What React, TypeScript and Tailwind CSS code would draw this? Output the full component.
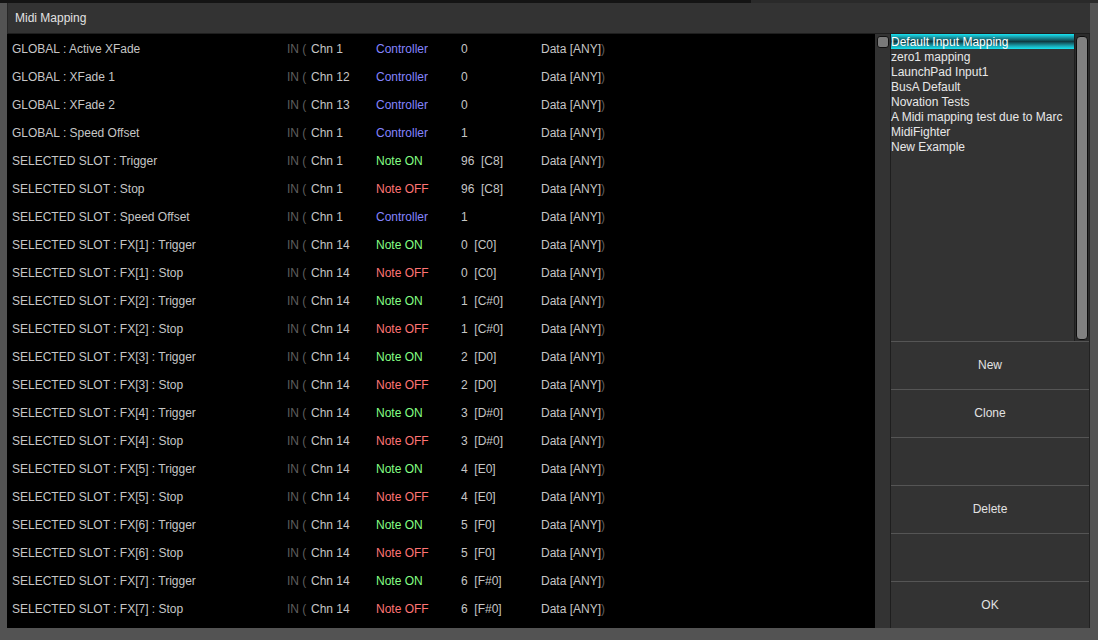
type Row = {
  name: string;
  chn: string;
  type: 'ctrl' | 'on' | 'off';
  num: string;
};

const rows: Row[] = [
  { name: 'GLOBAL : Active XFade', chn: 'Chn 1', type: 'ctrl', num: '0' },
  { name: 'GLOBAL : XFade 1', chn: 'Chn 12', type: 'ctrl', num: '0' },
  { name: 'GLOBAL : XFade 2', chn: 'Chn 13', type: 'ctrl', num: '0' },
  { name: 'GLOBAL : Speed Offset', chn: 'Chn 1', type: 'ctrl', num: '1' },
  { name: 'SELECTED SLOT : Trigger', chn: 'Chn 1', type: 'on', num: '96  [C8]' },
  { name: 'SELECTED SLOT : Stop', chn: 'Chn 1', type: 'off', num: '96  [C8]' },
  { name: 'SELECTED SLOT : Speed Offset', chn: 'Chn 1', type: 'ctrl', num: '1' },
  { name: 'SELECTED SLOT : FX[1] : Trigger', chn: 'Chn 14', type: 'on', num: '0  [C0]' },
  { name: 'SELECTED SLOT : FX[1] : Stop', chn: 'Chn 14', type: 'off', num: '0  [C0]' },
  { name: 'SELECTED SLOT : FX[2] : Trigger', chn: 'Chn 14', type: 'on', num: '1  [C#0]' },
  { name: 'SELECTED SLOT : FX[2] : Stop', chn: 'Chn 14', type: 'off', num: '1  [C#0]' },
  { name: 'SELECTED SLOT : FX[3] : Trigger', chn: 'Chn 14', type: 'on', num: '2  [D0]' },
  { name: 'SELECTED SLOT : FX[3] : Stop', chn: 'Chn 14', type: 'off', num: '2  [D0]' },
  { name: 'SELECTED SLOT : FX[4] : Trigger', chn: 'Chn 14', type: 'on', num: '3  [D#0]' },
  { name: 'SELECTED SLOT : FX[4] : Stop', chn: 'Chn 14', type: 'off', num: '3  [D#0]' },
  { name: 'SELECTED SLOT : FX[5] : Trigger', chn: 'Chn 14', type: 'on', num: '4  [E0]' },
  { name: 'SELECTED SLOT : FX[5] : Stop', chn: 'Chn 14', type: 'off', num: '4  [E0]' },
  { name: 'SELECTED SLOT : FX[6] : Trigger', chn: 'Chn 14', type: 'on', num: '5  [F0]' },
  { name: 'SELECTED SLOT : FX[6] : Stop', chn: 'Chn 14', type: 'off', num: '5  [F0]' },
  { name: 'SELECTED SLOT : FX[7] : Trigger', chn: 'Chn 14', type: 'on', num: '6  [F#0]' },
  { name: 'SELECTED SLOT : FX[7] : Stop', chn: 'Chn 14', type: 'off', num: '6  [F#0]' },
];

const mappings = [
  'Default Input Mapping',
  'zero1 mapping',
  'LaunchPad Input1',
  'BusA Default',
  'Novation Tests',
  'A Midi mapping test due to Marc',
  'MidiFighter',
  'New Example',
];

const buttons = ['New', 'Clone', '', 'Delete', '', 'OK'];

function TypeLabel({ type }: { type: Row['type'] }) {
  if (type === 'ctrl') return <span className="text-[#8484ff]">Controller</span>;
  if (type === 'on') return <span className="text-[#84ff84]">Note ON</span>;
  return <span className="text-[#ff7474]">Note OFF</span>;
}

export default function App() {
  return (
    <div
      className="w-[1098px] h-[640px] bg-[#535353] overflow-hidden text-[12px] leading-none"
      style={{ fontFamily: '"Liberation Sans", Arial, sans-serif' }}
    >
      {/* top strip */}
      <div className="flex h-[3px]">
        <div className="w-[751px] bg-[#141414]" />
        <div className="flex-1 bg-[#2a2a2a]" />
      </div>

      <div className="pl-[7px] pr-[8px]">
        {/* title bar */}
        <div className="h-[31px] bg-[#333333] border-l border-[#262626] border-b border-b-[#1e1e1e] flex items-center pl-[7px] text-[#e2e2e2]">
          Midi Mapping
        </div>

        <div className="flex h-[594px]">
          {/* mapping table */}
          <div className="w-[868px] bg-black pt-[1px]">
            {rows.map((r, i) => (
              <div key={i} className="h-[28px] flex items-center whitespace-pre">
                <span className="w-[280px] pl-[5px] text-[#c6c6c6]">{r.name}</span>
                <span className="w-[24px] text-[#5e5e5e]">IN (</span>
                <span className="w-[65px] text-[#c6c6c6]">{r.chn}</span>
                <span className="w-[85px]">
                  <TypeLabel type={r.type} />
                </span>
                <span className="w-[80px] text-[#c6c6c6]">{r.num}</span>
                <span className="text-[#c6c6c6]">Data [ANY]</span>
                <span className="text-[#5e5e5e]">)</span>
              </div>
            ))}
          </div>

          {/* right panel */}
          <div className="flex-1 flex bg-[#333333] border-r border-[#222]">
            <div className="w-[16px] border-r border-[#1e1e1e] pt-[2px] pl-[2px]">
              <div className="w-[12px] h-[12px] rounded-[3px] bg-[#7a7a7a] border border-[#111]" />
            </div>
            <div className="flex-1 flex flex-col">
              <div className="h-[307px] flex">
                <div className="flex-1 text-[#e8e8e8]">
                  {mappings.map((m, i) => (
                    <div
                      key={m}
                      className={
                        i === 0
                          ? 'h-[15px] flex items-center bg-[linear-gradient(to_bottom,#16e4f2_0%,#1aa6b4_18%,#0f3a42_50%,#1aa6b4_80%,#16e4f2_100%)] text-white'
                          : 'h-[15px] flex items-center'
                      }
                    >
                      {m}
                    </div>
                  ))}
                </div>
                <div className="w-[15px] bg-[#2c2c2c] border-l border-[#1e1e1e] pt-[2px] pb-[1px] px-[1px] flex">
                  <div className="flex-1 bg-[#808080] border border-[#0c0c0c] rounded-[4px]" />
                </div>
              </div>
              {buttons.map((b, i) => (
                <div
                  key={i}
                  className={
                    i === 5
                      ? 'h-[47px] flex items-center justify-center border-t border-[#555] text-[#e2e2e2]'
                      : 'h-[48px] flex items-center justify-center border-t border-[#555] text-[#e2e2e2] pb-[1px]'
                  }
                >
                  {b}
                </div>
              ))}
            </div>
          </div>
        </div>
      </div>
    </div>
  );
}
